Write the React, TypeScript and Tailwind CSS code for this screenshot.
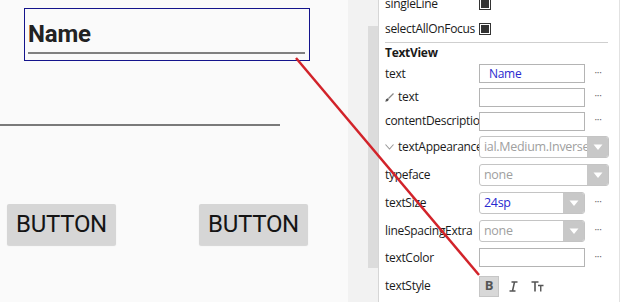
import React from "react";

const LABEL = "w-[100px] shrink-0 overflow-hidden whitespace-nowrap pl-[6px] pr-[2px]";

function Dots() {
  return (
    <div className="w-[26px] shrink-0 text-center text-[10px] leading-none text-[#666] -mt-[4px]">···</div>
  );
}

function TextBox({ value }: { value?: string }) {
  return (
    <div className="w-[106px] h-[19px] shrink-0 border border-[#b4b4b4] bg-white flex items-center pl-[9px] text-[#2a2acf] text-[12px]">
      {value}
    </div>
  );
}

function Arrow() {
  return (
    <div className="h-full w-[21px] bg-[#c8c8c8] flex items-center justify-center">
      <svg width="10" height="7" viewBox="0 0 10 7">
        <path d="M0.5 0.5 L9.5 0.5 L5 6 Z" fill="#fff" />
      </svg>
    </div>
  );
}

function Dropdown({ value, enabled = false, short = false }: { value: string; enabled?: boolean; short?: boolean }) {
  return (
    <div
      className={`${short ? "w-[106px]" : "w-[130px]"} h-[22px] shrink-0 border border-[#c4c4c4] rounded-[3px] overflow-hidden bg-white flex items-stretch`}
    >
      <div className={`flex-1 flex items-center pl-[4px] text-[12.5px] whitespace-nowrap overflow-hidden ${enabled ? "text-[#2a2acf]" : "text-[#a0a0a0]"}`}>
        {value}
      </div>
      <Arrow />
    </div>
  );
}

function Check() {
  return (
    <div className="w-[12px] h-[12px] border border-[#333] bg-white p-[1px]">
      <div className="w-full h-full bg-[#333]" />
    </div>
  );
}

function Row({ h, label, children, bold = false, icon }: { h: string; label: string; children?: React.ReactNode; bold?: boolean; icon?: React.ReactNode }) {
  return (
    <div className={`${h} flex items-center shrink-0`}>
      <div className={`${LABEL} ${bold ? "font-bold" : ""} flex items-center`}>
        {icon}
        <span>{label}</span>
      </div>
      {children}
    </div>
  );
}

export default function App() {
  return (
    <div className="relative w-[620px] h-[302px] overflow-hidden flex bg-white" style={{ fontFamily: "'Open Sans', 'Noto Sans', sans-serif" }}>
      {/* Canvas */}
      <div className="w-[348px] h-full bg-[#fafafa] shrink-0 flex flex-col" style={{ fontFamily: "Roboto, sans-serif" }}>
        <div className="ml-[24px] mt-[8px] w-[286px] h-[53px] border border-[#14148c] flex flex-col px-[3px]">
          <div className="mt-[13px] h-[24px] text-[24px] leading-[24px] font-bold text-[#222] tracking-[-0.2px]">Name</div>
          <div className="mt-[6px] h-[1.5px] bg-[#808080] w-[277px]" />
        </div>
        <div className="mt-[63px] w-[280px] h-[1.5px] bg-[#7a7a7a]" />
        <div className="mt-[78px] flex pl-[7px] gap-[83px]">
          <div className="w-[109px] h-[41px] bg-[#d6d6d6] rounded-[2px] shadow-[0_1px_1px_rgba(0,0,0,0.15)] flex items-center justify-center text-[24px] font-normal text-[#141414] tracking-[-0.3px]">BUTTON</div>
          <div className="w-[109px] h-[41px] bg-[#d6d6d6] rounded-[2px] shadow-[0_1px_1px_rgba(0,0,0,0.15)] flex items-center justify-center text-[24px] font-normal text-[#141414] tracking-[-0.3px]">BUTTON</div>
        </div>
      </div>

      {/* Strip */}
      <div className="w-[30px] h-full bg-[#f2f2f2] shrink-0 flex justify-end border-r border-[#d6d6d6] box-content">
        <div className="w-[10px] mt-[26px] h-[242px] bg-[#dcdcdc]" />
      </div>

      {/* Properties */}
      <div className="flex-1 h-full bg-white text-[12px] tracking-[-0.3px] text-[#1a1a1a] border-r border-[#e2e2e2]">
        <div className="flex flex-col -mt-[8px]">
          <Row h="h-[24px]" label="singleLine"><Check /></Row>
          <Row h="h-[26px]" label="selectAllOnFocus"><Check /></Row>
          <div className="ml-[6px] w-[223px] h-px bg-[#cfcfcf]" />
          <Row h="h-[19px]" label="TextView" bold />
          <Row h="h-[23px]" label="text"><TextBox value="Name" /><Dots /></Row>
          <Row
            h="h-[24px]"
            label="text"
            icon={
              <svg width="9" height="9" viewBox="0 0 9 9" className="mr-[4px] shrink-0">
                <path d="M8.5 0.5 L3.5 5.5" stroke="#888" strokeWidth="1.3" />
                <path d="M0.3 8.7 L1 6.2 L2.8 5.2 L3.8 6.2 L3 8 Z" fill="#555" />
              </svg>
            }
          >
            <TextBox /><Dots />
          </Row>
          <Row h="h-[24px]" label="contentDescription"><TextBox /><Dots /></Row>
          <Row
            h="h-[28px]"
            label="textAppearance"
            icon={
              <svg width="9" height="6" viewBox="0 0 9 6" className="mr-[4px] shrink-0">
                <path d="M0.5 0.5 L4.5 5 L8.5 0.5" stroke="#999" strokeWidth="1.1" fill="none" />
              </svg>
            }
          >
            <Dropdown value="ial.Medium.Inverse" />
          </Row>
          <Row h="h-[28px]" label="typeface"><Dropdown value="none" /></Row>
          <Row h="h-[28px]" label="textSize"><Dropdown value="24sp" enabled short /><Dots /></Row>
          <Row h="h-[28px]" label="lineSpacingExtra"><Dropdown value="none" short /><Dots /></Row>
          <Row h="h-[25px]" label="textColor"><TextBox /><Dots /></Row>
          <Row h="h-[32px]" label="textStyle">
            <div className="flex items-center">
              <div className="w-[20px] h-[21px] bg-[#d8d8d8] border border-[#c6c6c6] flex items-center justify-center text-[13px] font-bold text-[#555]">B</div>
              <div className="w-[28px] flex justify-center">
                <svg width="9" height="11" viewBox="0 0 9 11">
                  <path d="M2.5 1 H8.5 M0.5 10 H6.5 M5.5 1 L3.5 10" stroke="#555" strokeWidth="1.5" fill="none" />
                </svg>
              </div>
              <div className="w-[20px] flex justify-center">
                <svg width="13" height="11" viewBox="0 0 13 11">
                  <path d="M0.5 1 H7.5 M4 1 V10.5" stroke="#555" strokeWidth="1.6" fill="none" />
                  <path d="M7 4.5 H12.5 M9.75 4.5 V10.5" stroke="#555" strokeWidth="1.4" fill="none" />
                </svg>
              </div>
            </div>
          </Row>
        </div>
      </div>

      {/* Red connector */}
      <svg className="absolute inset-0 pointer-events-none" width="620" height="302">
        <line x1="296" y1="58" x2="479" y2="275" stroke="#d2232a" strokeWidth="2.5" />
      </svg>
    </div>
  );
}
